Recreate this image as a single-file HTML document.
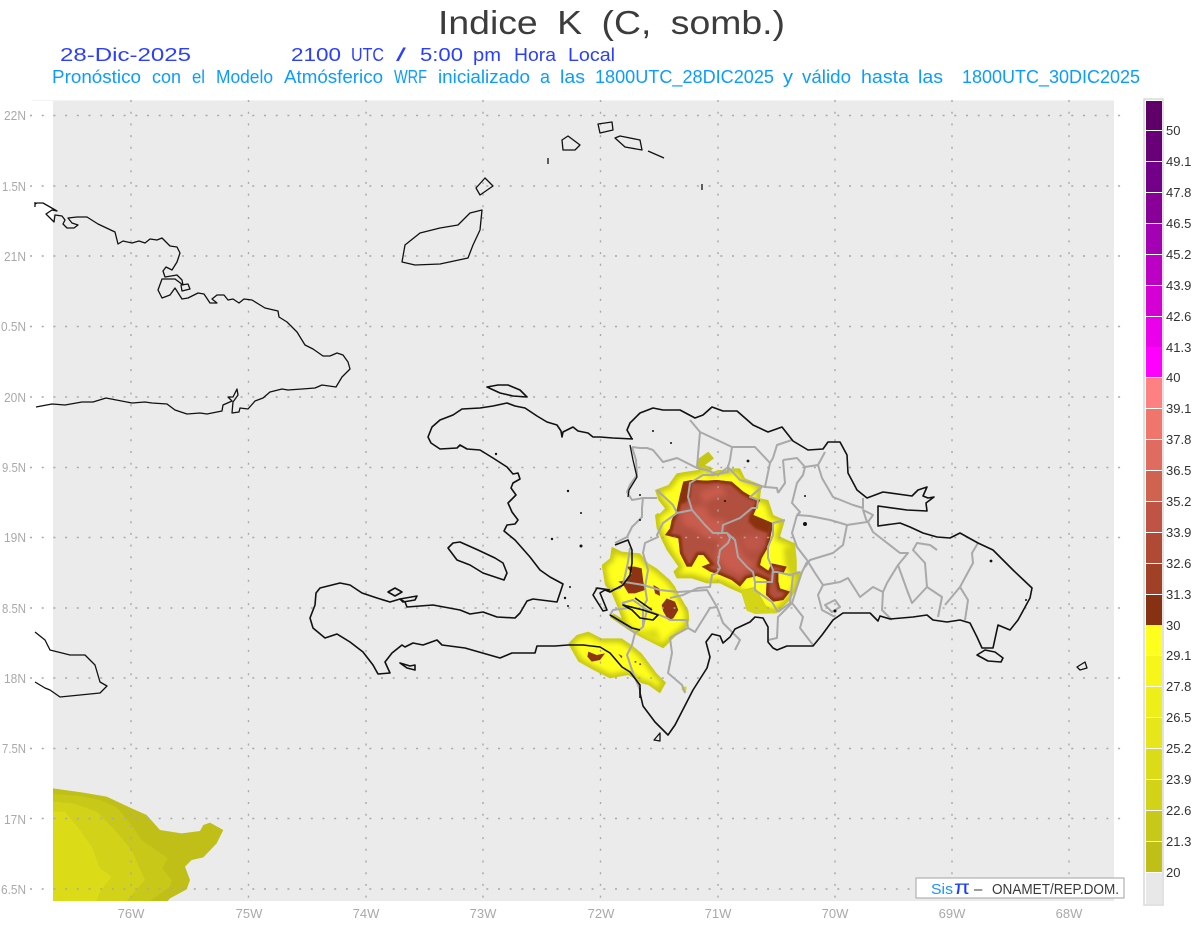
<!DOCTYPE html>
<html>
<head>
<meta charset="utf-8">
<title>Indice K</title>
<style>
html,body{margin:0;padding:0;background:#fff;width:1200px;height:927px;overflow:hidden}
svg{display:block}
text{font-family:"Liberation Sans",sans-serif}
</style>
</head>
<body>
<svg width="1200" height="927" viewBox="0 0 1200 927" xmlns="http://www.w3.org/2000/svg">
<defs>
<clipPath id="mapclip"><rect x="53" y="101" width="1061" height="800"/></clipPath>
<filter id="b1" x="-20%" y="-20%" width="140%" height="140%"><feGaussianBlur stdDeviation="3"/></filter>
<filter id="b2" x="-30%" y="-30%" width="160%" height="160%"><feGaussianBlur stdDeviation="8"/></filter>
<path id="mainY" d="M45,150 L85,135 110,100 140,95 175,90 170,60 205,35 222,55 195,75 220,85 205,100 235,90 265,90 275,85 300,85 315,115 365,135 360,175 385,180 400,225 435,240 420,290 465,310 470,360 470,395 485,395 470,445 450,480 410,520 345,520 320,510 305,460 270,445 240,430 200,430 155,415 110,415 100,395 115,380 80,330 65,300 50,265 45,225 75,205 55,180Z"/>
<path id="mainB" d="M130,125 L155,120 200,122 230,120 275,125 310,155 335,170 360,180 340,225 400,250 385,320 365,355 360,375 385,392 395,370 440,380 430,400 415,400 415,425 420,445 450,455 430,480 400,485 378,465 380,420 350,408 320,415 300,440 275,420 240,405 210,395 185,380 210,370 190,345 175,345 155,380 140,380 120,340 115,295 75,285 90,265 95,240 110,210 120,165Z"/>
<path id="blobA" d="M155,50 L185,65 240,70 265,100 290,115 330,150 345,170 355,190 385,240 388,270 378,295 345,320 310,355 260,330 225,312 205,300 150,262 160,250 185,265 170,225 155,190 135,165 125,105 150,85Z"/>
<path id="blobB" d="M25,340 L50,315 85,305 125,325 150,325 185,325 215,345 245,370 290,430 318,458 300,490 265,465 245,460 205,435 150,445 100,420 55,395 35,360Z"/>
<clipPath id="cMainY"><use href="#mainY"/></clipPath>
<clipPath id="cMainB"><use href="#mainB"/></clipPath>
<clipPath id="cA"><use href="#blobA"/></clipPath>
<clipPath id="cB"><use href="#blobB"/></clipPath>
</defs>
<rect width="1200" height="927" fill="#fff"/>
<line x1="32" y1="100.5" x2="1114" y2="100.5" stroke="#f3f3f3"/>
<rect x="53" y="101" width="1061" height="800" fill="#ebebeb"/>

<!-- SW corner field -->
<g clip-path="url(#mapclip)">
<g transform="translate(0,770) scale(.33333)">
<path fill="#bfbf18" d="M159,55 L250,68 320,80 395,115 440,135 480,180 545,190 600,183 610,165 630,158 670,180 650,220 610,262 575,270 555,290 570,330 560,358 510,385 503,393 159,393Z"/>
<path fill="#c8c818" d="M159,72 L240,78 300,90 350,112 395,165 425,210 503,265 487,295 515,330 510,350 450,393 159,393Z"/>
<path fill="#d2d218" d="M159,95 L220,100 290,125 340,175 395,240 435,330 380,393 159,393Z"/>
<path fill="#dbdb18" d="M159,125 L195,125 240,180 275,230 300,295 335,320 300,365 290,393 159,393Z"/>
</g>
</g>

<!-- Central convective blobs -->
<g transform="translate(640,440) scale(.33333)">
<g clip-path="url(#cMainY)">
<use href="#mainY" fill="#ffff1e"/>
<use href="#mainY" fill="none" stroke="#c4c418" stroke-width="26" filter="url(#b2)"/>
<path fill="#cfcf18" filter="url(#b2)" d="M430,320 L470,320 475,395 450,410 435,370Z"/>
<path fill="#cfcf18" d="M305,450 L345,440 380,500 415,520 405,545 370,545 345,520 320,525 308,490Z"/>
</g>
<path fill="#d5d518" d="M305,452 L345,445 375,495 412,518 408,520 345,522 320,512Z"/>
<path fill="#ebebeb" d="M48,210 L62,192 75,205 58,222Z"/>
<use href="#mainB" fill="#b1503f"/>
<g clip-path="url(#cMainB)">
<use href="#mainB" fill="none" stroke="#8a3210" stroke-width="18" filter="url(#b1)"/>
<path fill="#8a3210" filter="url(#b1)" d="M120,130 L155,125 150,170 135,190 115,190Z"/>
<path fill="#8a3210" filter="url(#b1)" d="M330,225 L395,250 385,280 345,265 325,245Z"/>
<path fill="#c85c4e" filter="url(#b2)" d="M120,215 L190,195 215,235 260,240 250,280 290,300 310,345 345,375 300,405 255,385 225,350 240,300 190,290 170,270 130,255Z"/>
<path fill="#c85c4e" filter="url(#b2)" d="M180,155 L240,135 260,165 220,175 190,190Z"/>
<path fill="#c05648" filter="url(#b2)" d="M300,290 L370,285 365,325 320,335Z"/>
</g>
</g>

<g transform="translate(560,530) scale(.33333)">
<g clip-path="url(#cA)">
<use href="#blobA" fill="#ffff1e"/>
<use href="#blobA" fill="none" stroke="#c4c418" stroke-width="24" filter="url(#b2)"/>
<path fill="#dcdc18" filter="url(#b2)" d="M235,305 L290,295 305,335 265,325Z"/>
</g>
<path fill="#8c3413" d="M200,110 L225,110 245,115 250,155 255,180 225,190 205,190 190,165 175,155 200,150 215,130Z"/>
<path fill="#8c3413" d="M280,165 L298,175 300,198 285,190Z"/>
<path fill="#8c3413" d="M320,205 L345,215 355,240 340,265 325,270 310,245 305,225Z"/>
<g clip-path="url(#cB)">
<use href="#blobB" fill="#ffff1e"/>
<use href="#blobB" fill="none" stroke="#c4c418" stroke-width="24" filter="url(#b2)"/>
</g>
<path fill="#8c3413" d="M85,365 L110,375 135,370 120,390 95,395 82,380Z"/>
<path fill="#8c3413" d="M175,372 L187,378 185,385Z"/>
<path fill="#8c3413" d="M224,393 h5 v5 h-5z M238,400 h5 v5 h-5z"/>
<path fill="#d8d818" d="M365,470 L380,470 378,488 365,480Z"/>
</g>

<!-- Grid -->
<g stroke="#a8a8a8" stroke-width="1.4" stroke-dasharray="2 9.7" fill="none">
<path d="M30,115.5H1124M30,186H1124M30,256H1124M30,326.5H1124M30,397H1124M30,467.5H1124M30,537.5H1124M30,608H1124M30,678H1124M30,748.5H1124M30,818.5H1124M30,889H1124"/>
<path d="M131,100V906M248.5,100V906M366,100V906M483,100V906M600.5,100V906M718,100V906M835,100V906M952,100V906M1069,100V906"/>
</g>

<!-- Provinces -->
<g fill="none" stroke="#a9a9a9" stroke-width="2" stroke-linejoin="round">
<path d="M632,447 L640,448 647,448 653,450 663,462 677,458 697,468 707,470 718,475 728,467 740,480 758,485 765,487 777,488 778,493"/>
<path d="M690,420 L700,432 698,455 697,468M700,432 L732,447 755,447 770,463 773,458 777,445 792,440M732,447 L730,460 728,467M770,463 L765,487"/>
<path d="M783,460 L797,458 805,467 818,465 825,452M783,460 L785,483 778,493M805,467 L803,475 797,483 792,503 800,512 797,515M818,465 L822,478 833,497 853,505 863,508 863,498"/>
<path d="M797,515 L810,516 830,520 837,522 847,525 843,545 833,553 810,560 805,567M797,515 L792,533 797,547 807,560"/>
<path d="M847,525 L867,522 863,510 873,515 868,522 873,532 900,553 908,553 898,565 887,583 883,592 873,587 860,597 848,578 840,582 823,585 815,573 807,560"/>
<path d="M823,585 L818,595 822,610 835,617M898,565 L907,590 912,603 927,587 925,563 913,550 917,543 930,545 937,550M883,592 L882,610 892,620M927,587 L942,597 938,617M960,587 L968,600 965,620M960,587 L945,605M960,587 L973,563 972,553 978,543"/>
<path d="M792,603 L803,617 800,628 813,645M792,603 L778,617 777,638 768,640M802,572 L797,587 792,603M807,562 L802,572M835,600 L840,607 832,612 825,605Z"/>
<path d="M657,490 L673,505 677,513 692,510 705,525 713,533 722,533 723,525 740,518 752,508 757,508 758,500 750,497 762,487M692,510 L688,497 690,483 703,475 713,475 728,472 728,465"/>
<path d="M713,533 L727,533 735,540 738,557 747,567 753,572 755,582 772,582 773,570 768,558 768,547 773,535 773,523 785,520M727,533 L730,538 728,543 720,550 718,563 720,568 717,573 712,575 710,587 698,588 683,595 670,598"/>
<path d="M755,582 L755,590 772,602 778,612M773,572 L777,572 790,575 800,572M793,575 L790,603 778,612"/>
<path d="M677,513 L663,523 657,535 658,537 645,543 643,553 648,570 645,587 647,600 643,607 643,627"/>
<path d="M632,447 L636,460 637,475 630,485 627,492 632,500 643,498 657,498M643,498 L642,508 642,517 632,527 627,537 615,543"/>
<path d="M595,588 L610,590 620,588 625,582 643,585 660,590 678,592 707,590 717,607 723,623 740,640 735,650M622,603 L633,600 647,610 667,618 670,620 687,620 688,628 675,635 670,638 672,653 668,673 682,685 685,693M622,603 L628,608 613,610 610,615 635,633 632,645 627,655 632,670 640,690"/>
<path d="M688,628 L695,632 710,608 717,607M647,610 L643,627 635,633"/>
<path d="M623,585 L628,562 630,548"/>
</g>

<!-- Coast lines -->
<g fill="none" stroke="#111" stroke-width="1.3" stroke-linejoin="round">
<path d="M35,202 V207 M35,204 L37,203 43,203 50,207 57,211 52,210 46,214 54,222 55,215 62,216 65,220 63,224 67,228 74,228 78,225 72,223 68,218 77,217 87,217 98,224 115,232 118,244 123,241 132,243 139,241 145,243 150,239 157,240 162,238 170,246 177,247 180,253 177,262 172,270 166,267 163,271 165,277 177,275 182,280 183,285 175,279 162,279 158,290 162,298 170,295 175,288 182,299 188,298 198,293 204,294 210,303 217,303 212,299 217,295 224,295 228,300 233,299 239,303 244,299 252,300 265,308 278,311 279,317 287,322 297,332 305,345 313,349 323,356 330,356 337,353 343,355 348,362 350,369 342,377 336,387 322,385 315,388 302,389 288,390 282,389 270,392 263,398 255,401 248,409 240,408 239,412 232,413 233,402 238,395 237,389 233,397 228,397 232,401 223,405 222,411 207,414 200,413 187,414 175,410 167,404 152,403 145,402 132,403 106,398 93,402 82,402 65,405 52,404 36,407"/>
<path d="M181,285 L188,284 190,289 182,291Z"/>
<path d="M35,632 L45,640 50,650 70,655 85,655 95,665 100,682 107,686 100,693 80,695 60,697 50,690 45,688 35,682"/>
<path d="M402,262 L405,245 420,233 440,228 458,225 470,213 482,210 480,230 473,245 468,258 440,264 415,265Z"/>
<path d="M476,188 L485,178 493,186 480,195Z"/>
<path d="M562,140 L568,136 580,145 575,150 563,150Z"/>
<path d="M598,124 L612,122 613,130 600,133ZM615,138 L620,136 640,140 642,150 625,147Z"/>
<path d="M648,151 L664,158"/>
<path d="M548,158 V164M702,184 V190"/>
<path d="M1077,667 L1085,662 1087,668 1080,670Z"/>
<path d="M654,740 L660,733 660,741Z"/>
</g>
<g fill="none" stroke="#111" stroke-width="1.6" stroke-linejoin="round">
<path d="M487,387 L498,385 508,385 520,390 527,397 513,396 500,393Z"/>
<path d="M448,548 L453,543 460,542 478,550 495,558 503,563 507,573 504,580 483,573 470,565 457,560Z"/>
<path d="M633,439 L613,438 600,437 593,437 588,433 578,431 573,427 563,432 562,437 561,431 557,425 547,422 537,416 525,408 515,406 507,403 493,406 480,408 462,409 453,415 440,420 432,427 428,437 431,443 440,449 457,448 460,445 467,449 480,450 493,458 507,467 513,474 518,473 520,479 513,483 511,488 516,495 508,503 512,512 518,520 515,524 507,525 504,531 515,540 530,557 540,570 550,577 563,584 561,590 557,602 533,599 527,601 520,613 515,618 497,617 483,612 470,614 460,610 433,605 407,607 405,602 400,599 390,602 377,598 362,593 350,585 340,583 320,588 316,593 315,605 310,618 313,628 325,638 337,634 350,642 363,652 373,665 378,674 390,673 385,662 392,653 402,645 405,647 413,643 423,645 437,640 442,645 465,648 500,658 512,653 535,653 537,646 555,646 568,645 583,645 600,647 610,653 622,667 630,672 640,685 640,693 643,706 655,722 668,735 675,725 693,690 707,668 710,657 706,642 712,634 720,636 723,643 730,637 735,629 750,622 755,617 763,618 768,627 768,642 773,648 777,650 787,646 813,646 822,635 833,620 843,613 870,613 878,621 880,616 890,619 913,617 927,615 933,620 947,622 960,620 970,623 977,637 982,648 993,648 998,625 1010,630 1018,620 1030,598 1032,588 1013,570 993,550 978,543 960,533 950,538 937,537 923,533 910,527 900,523 878,526 878,506 907,510 927,511 926,503 934,497 928,498 923,496 927,487 918,490 912,496 883,492 867,498 857,490 848,473 847,455 840,442 828,442 823,449 808,450 793,441 782,427 768,432 753,425 737,411 723,411 712,407 703,415 695,418 680,410 663,410 653,408 640,413 630,423 627,430 632,439"/>
<path d="M630,445 L633,460 637,477 629,490 628,497" stroke-width="1.3"/>
<path d="M615,545 L628,540 632,550 632,563 630,575 623,585 610,592 605,590 600,593 607,610 603,611 593,595 597,588 610,590"/>
<path d="M623,605 L643,610 658,615 653,620 640,618 632,610ZM635,598 L652,610M610,615 L632,628 640,630"/>
<path d="M640,688 V698"/>
<path d="M977,655 L985,650 995,652 1003,658 1001,662 988,661Z"/>
<path d="M400,663 L407,668 415,670 415,665 410,666Z"/>
<path d="M388,592 L395,588 402,592 395,596Z"/>
<path d="M400,599 L417,596 415,600 403,602Z"/>
</g>
<g fill="#111">
<circle cx="496" cy="454" r="1.2"/><circle cx="568" cy="491" r="1.2"/><circle cx="552" cy="539" r="1.2"/><circle cx="581" cy="546" r="1.5"/><circle cx="581" cy="513" r="1"/><circle cx="640" cy="520" r="1"/><circle cx="653" cy="431" r="1"/><circle cx="671" cy="443" r="1"/><circle cx="748" cy="461" r="1.4"/><circle cx="725" cy="501" r="1"/><circle cx="805" cy="496" r="1"/><circle cx="805" cy="524" r="2"/><circle cx="991" cy="561" r="1.4"/><circle cx="1026" cy="600" r="1"/><circle cx="835" cy="611" r="1.5"/><circle cx="570" cy="587" r="1"/><circle cx="565" cy="598" r="1.2"/><circle cx="568" cy="606" r="1"/><circle cx="640" cy="495" r="1"/>
</g>

<!-- Axis labels -->
<g fill="#a9a9a9" font-size="13">
<text x="4" y="120" textLength="22" lengthAdjust="spacingAndGlyphs">22N</text><text x="2" y="191" textLength="24" lengthAdjust="spacingAndGlyphs">1.5N</text><text x="4" y="261" textLength="22" lengthAdjust="spacingAndGlyphs">21N</text><text x="1" y="331" textLength="25" lengthAdjust="spacingAndGlyphs">0.5N</text><text x="4" y="402" textLength="22" lengthAdjust="spacingAndGlyphs">20N</text><text x="2" y="472" textLength="24" lengthAdjust="spacingAndGlyphs">9.5N</text><text x="4" y="542" textLength="22" lengthAdjust="spacingAndGlyphs">19N</text><text x="2" y="613" textLength="24" lengthAdjust="spacingAndGlyphs">8.5N</text><text x="4" y="683" textLength="22" lengthAdjust="spacingAndGlyphs">18N</text><text x="2" y="753" textLength="24" lengthAdjust="spacingAndGlyphs">7.5N</text><text x="4" y="824" textLength="22" lengthAdjust="spacingAndGlyphs">17N</text><text x="1" y="894" textLength="25" lengthAdjust="spacingAndGlyphs">6.5N</text>
</g>
<g fill="#a9a9a9" font-size="13" text-anchor="middle">
<text x="131" y="918">76W</text><text x="249" y="918">75W</text><text x="366" y="918">74W</text><text x="483" y="918">73W</text><text x="601" y="918">72W</text><text x="718" y="918">71W</text><text x="835" y="918">70W</text><text x="952" y="918">69W</text><text x="1069" y="918">68W</text>
</g>

<!-- Titles -->
<text x="438" y="34" font-size="33" fill="#3c3c3c" textLength="347" lengthAdjust="spacingAndGlyphs" word-spacing="8">Indice K (C, somb.)</text>
<g fill="#2a3fff" font-size="18" lengthAdjust="spacingAndGlyphs">
<text x="60" y="61" textLength="131" lengthAdjust="spacingAndGlyphs">28-Dic-2025</text>
<text x="291" y="61" textLength="50" lengthAdjust="spacingAndGlyphs">2100</text>
<text x="351" y="61" textLength="33" lengthAdjust="spacingAndGlyphs">UTC</text>
<text x="396" y="61" textLength="10" lengthAdjust="spacingAndGlyphs">/</text>
<text x="420" y="61" textLength="43" lengthAdjust="spacingAndGlyphs">5:00</text>
<text x="473" y="61" textLength="28" lengthAdjust="spacingAndGlyphs">pm</text>
<text x="514" y="61" textLength="42" lengthAdjust="spacingAndGlyphs">Hora</text>
<text x="568" y="61" textLength="47" lengthAdjust="spacingAndGlyphs">Local</text>
</g>
<g fill="#0a9cff" font-size="18">
<text x="52" y="83" textLength="89" lengthAdjust="spacingAndGlyphs">Pronóstico</text>
<text x="152" y="83" textLength="29" lengthAdjust="spacingAndGlyphs">con</text>
<text x="192" y="83" textLength="13" lengthAdjust="spacingAndGlyphs">el</text>
<text x="216" y="83" textLength="57" lengthAdjust="spacingAndGlyphs">Modelo</text>
<text x="284" y="83" textLength="99" lengthAdjust="spacingAndGlyphs">Atmósferico</text>
<text x="394" y="83" textLength="33" lengthAdjust="spacingAndGlyphs">WRF</text>
<text x="438" y="83" textLength="92" lengthAdjust="spacingAndGlyphs">inicializado</text>
<text x="540" y="83" textLength="10" lengthAdjust="spacingAndGlyphs">a</text>
<text x="560" y="83" textLength="25" lengthAdjust="spacingAndGlyphs">las</text>
<text x="595" y="83" textLength="179" lengthAdjust="spacingAndGlyphs">1800UTC_28DIC2025</text>
<text x="783" y="83" textLength="10" lengthAdjust="spacingAndGlyphs">y</text>
<text x="802" y="83" textLength="49" lengthAdjust="spacingAndGlyphs">válido</text>
<text x="861" y="83" textLength="48" lengthAdjust="spacingAndGlyphs">hasta</text>
<text x="918" y="83" textLength="25" lengthAdjust="spacingAndGlyphs">las</text>
<text x="962" y="83" textLength="178" lengthAdjust="spacingAndGlyphs">1800UTC_30DIC2025</text>
</g>

<!-- Colorbar -->
<rect x="1144" y="99" width="19" height="806" fill="#fff" stroke="#d8d8d8" stroke-width="1.5"/>
<g>
<rect x="1146" y="101" width="16" height="29" fill="#5e0068"/>
<rect x="1146" y="131" width="16" height="30" fill="#680078"/>
<rect x="1146" y="162" width="16" height="30" fill="#730088"/>
<rect x="1146" y="193" width="16" height="30" fill="#880098"/>
<rect x="1146" y="224" width="16" height="30" fill="#a400b4"/>
<rect x="1146" y="255" width="16" height="30" fill="#bc00c6"/>
<rect x="1146" y="286" width="16" height="30" fill="#d400d4"/>
<rect x="1146" y="317" width="16" height="30" fill="#ea00ea"/>
<rect x="1146" y="347" width="16" height="30" fill="#ff00ff"/>
<rect x="1146" y="378" width="16" height="30" fill="#ff8080"/>
<rect x="1146" y="409" width="16" height="30" fill="#f0766c"/>
<rect x="1146" y="440" width="16" height="30" fill="#e06c60"/>
<rect x="1146" y="471" width="16" height="30" fill="#d06250"/>
<rect x="1146" y="502" width="16" height="30" fill="#c05444"/>
<rect x="1146" y="533" width="16" height="30" fill="#b04a34"/>
<rect x="1146" y="564" width="16" height="30" fill="#a04026"/>
<rect x="1146" y="595" width="16" height="30" fill="#863212"/>
<rect x="1146" y="625" width="16" height="30" fill="#ffff1e"/>
<rect x="1146" y="656" width="16" height="30" fill="#f6f61a"/>
<rect x="1146" y="687" width="16" height="30" fill="#eeee1a"/>
<rect x="1146" y="718" width="16" height="30" fill="#e6e61a"/>
<rect x="1146" y="749" width="16" height="30" fill="#dbdb18"/>
<rect x="1146" y="780" width="16" height="30" fill="#d2d218"/>
<rect x="1146" y="811" width="16" height="30" fill="#c8c818"/>
<rect x="1146" y="842" width="16" height="30" fill="#bfbf18"/>
<rect x="1146" y="873" width="16" height="31" fill="#e8e8e8"/>
</g>
<g fill="#333" font-size="13">
<text x="1166" y="135">50</text><text x="1166" y="166">49.1</text><text x="1166" y="197">47.8</text><text x="1166" y="228">46.5</text><text x="1166" y="259">45.2</text><text x="1166" y="290">43.9</text><text x="1166" y="321">42.6</text><text x="1166" y="352">41.3</text><text x="1166" y="382">40</text><text x="1166" y="413">39.1</text><text x="1166" y="444">37.8</text><text x="1166" y="475">36.5</text><text x="1166" y="506">35.2</text><text x="1166" y="537">33.9</text><text x="1166" y="568">32.6</text><text x="1166" y="599">31.3</text><text x="1166" y="630">30</text><text x="1166" y="660">29.1</text><text x="1166" y="691">27.8</text><text x="1166" y="722">26.5</text><text x="1166" y="753">25.2</text><text x="1166" y="784">23.9</text><text x="1166" y="815">22.6</text><text x="1166" y="846">21.3</text><text x="1166" y="877">20</text>
</g>

<!-- Footer box -->
<rect x="916" y="878" width="208" height="20" fill="#fff" stroke="#b0b0b0" stroke-width="1.2"/>
<text x="931" y="894" font-size="15" fill="#1a94ff" textLength="22" lengthAdjust="spacingAndGlyphs">Sis</text>
<text x="954" y="894" font-size="19" fill="#1a3cff" textLength="16" lengthAdjust="spacingAndGlyphs">π</text>
<text x="974" y="894" font-size="15" fill="#3a3a3a">–</text>
<text x="992" y="894" font-size="15" fill="#3a3a3a" textLength="127" lengthAdjust="spacingAndGlyphs">ONAMET/REP.DOM.</text>
</svg>
</body>
</html>
